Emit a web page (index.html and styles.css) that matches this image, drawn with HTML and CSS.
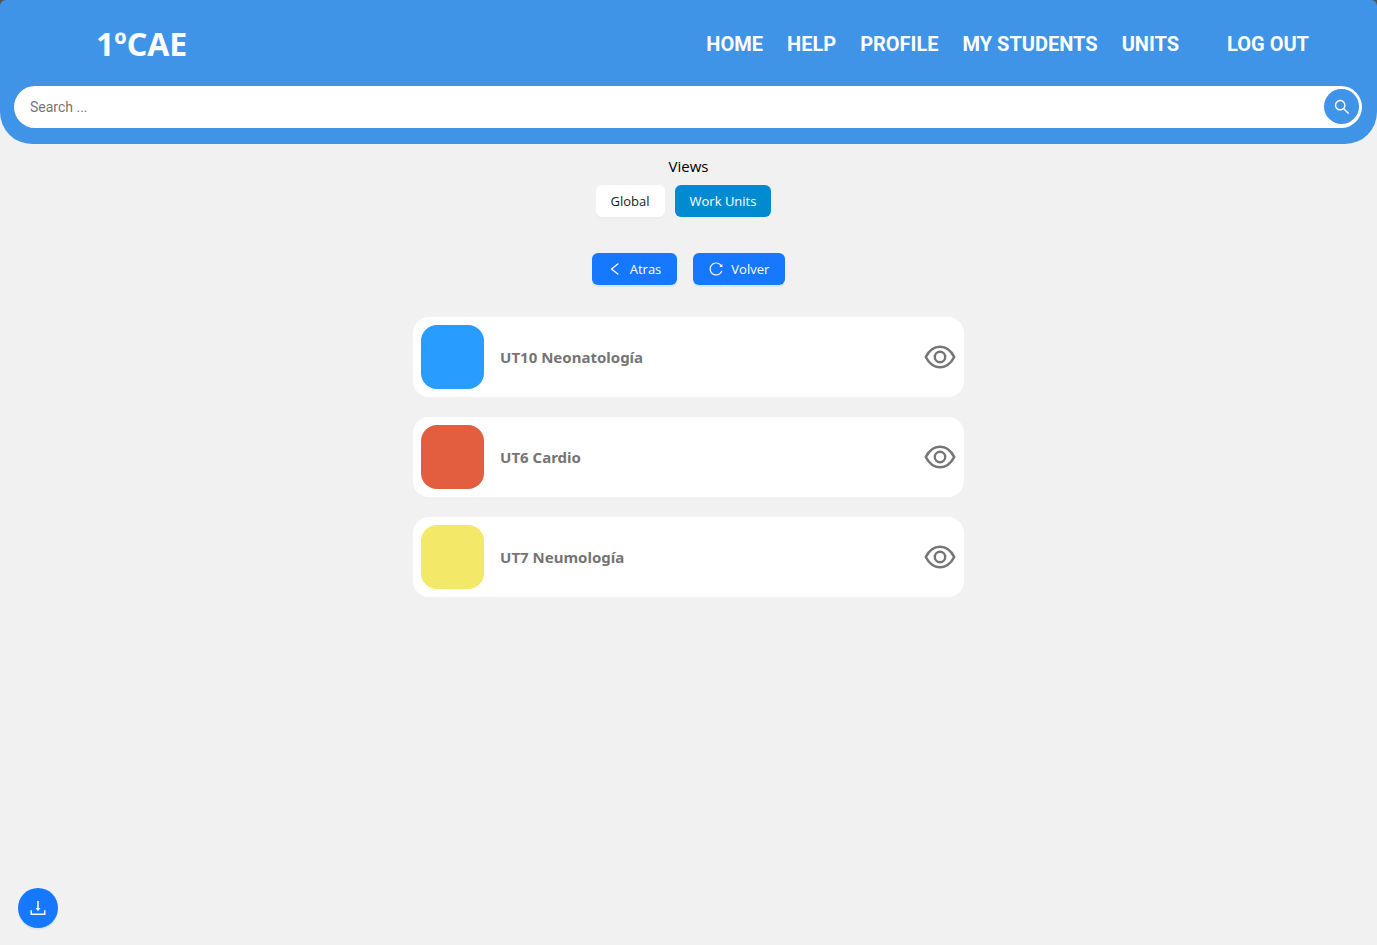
FILE: index.html
```html
<!DOCTYPE html>
<html lang="en">
<head>
<meta charset="utf-8">
<meta name="viewport" content="width=device-width, initial-scale=1">
<title>1ºCAE</title>
<link rel="stylesheet" href="styles.css">
</head>
<body>
<svg class="sprite" aria-hidden="true">
  <symbol id="eye" viewBox="0 0 32 24">
    <path d="M1.8 12C5.2 5.4 10 1.8 16 1.8S26.800 5.400 30.200 12C26.800 18.600 22 22.200 16 22.200S5.200 18.600 1.800 12Z" fill="none" stroke="currentColor" stroke-width="2.600" stroke-linejoin="round"/>
    <circle cx="16" cy="12" r="5.200" fill="none" stroke="currentColor" stroke-width="2.400"/>
  </symbol>
</svg>
<header class="header">
  <div class="topbar">
    <h1 class="brand">1ºCAE</h1>
    <nav class="nav">
      <a href="#">HOME</a>
      <a href="#">HELP</a>
      <a href="#">PROFILE</a>
      <a href="#">MY STUDENTS</a>
      <a href="#">UNITS</a>
      <a class="logout" href="#">LOG OUT</a>
    </nav>
  </div>
  <form class="search">
    <input class="search-input" type="text" placeholder="Search ..." aria-label="Search">
    <button class="search-button" type="button" aria-label="Search">
      <svg class="icon icon-large" viewBox="64 64 896 896"><path d="M909.6 854.5L649.9 594.8C690.2 542.7 712 479 712 412c0-80.2-31.3-155.4-87.9-212.1-56.6-56.7-132-87.9-212.1-87.9s-155.5 31.3-212.1 87.9C143.2 256.5 112 331.8 112 412c0 80.1 31.3 155.5 87.9 212.1C256.5 680.8 331.8 712 412 712c67 0 130.6-21.8 182.7-62l259.7 259.6a8.2 8.2 0 0011.6 0l43.6-43.5a8.2 8.2 0 000-11.6zM570.4 570.4C528 612.7 471.8 636 412 636s-116-23.3-158.4-65.6C211.3 528 188 471.8 188 412s23.300-116.100 65.600-158.400C296 211.300 352.200 188 412 188s116.100 23.200 158.400 65.600S636 352.200 636 412s-23.300 116.100-65.600 158.400z"/></svg>
    </button>
  </form>
</header>
<main class="main">
  <p class="views-label">Views</p>
  <div class="views">
    <button class="button button-light" type="button">Global</button>
    <button class="button button-active" type="button">Work Units</button>
  </div>
  <div class="actions">
    <button class="button button-primary" type="button">
      <svg class="icon" viewBox="64 64 896 896"><path d="M724 218.3V141c0-6.7-7.7-10.4-12.9-6.3L260.3 486.8a31.86 31.86 0 000 50.3l450.8 352.1c5.300 4.100 12.900.4 12.900-6.300v-77.300c0-4.900-2.300-9.600-6.100-12.600l-360-281 360-281.100c3.800-3 6.100-7.700 6.100-12.600z"/></svg>
      <span>Atras</span>
    </button>
    <button class="button button-primary" type="button">
      <svg class="icon" viewBox="64 64 896 896"><path d="M909.1 209.3l-56.4 44.1C775.8 155.1 656.2 92 521.9 92 290 92 102.3 279.5 102 511.5 101.7 743.7 289.8 932 521.9 932c181.3 0 335.8-115 394.6-276.1 1.5-4.2-.7-8.9-4.9-10.3l-56.7-19.5a8 8 0 00-10.1 4.8c-1.8 5-3.8 10-5.9 14.9-17.3 41-42.1 77.8-73.7 109.4A344.77 344.77 0 01655.9 829c-42.3 17.9-87.4 27-133.8 27-46.5 0-91.5-9.1-133.8-27A341.5 341.5 0 01279 755.2a342.16 342.16 0 01-73.7-109.4c-17.9-42.4-27-87.4-27-133.9s9.1-91.5 27-133.9c17.3-41 42.1-77.8 73.7-109.4 31.6-31.6 68.4-56.4 109.3-73.8 42.3-17.9 87.4-27 133.8-27 46.5 0 91.5 9.1 133.8 27a341.5 341.5 0 01109.3 73.8c9.9 9.9 19.2 20.4 27.8 31.4l-60.2 47a8 8 0 003 14.1l175.6 43c5 1.2 9.9-2.6 9.9-7.7l.8-180.9c-.1-6.600-7.800-10.300-13-6.200z"/></svg>
      <span>Volver</span>
    </button>
  </div>
  <ul class="units">
    <li class="unit">
      <span class="swatch swatch-blue"></span>
      <span class="unit-name">UT10 Neonatología</span>
      <button class="view-button" type="button" aria-label="View UT10 Neonatología"><svg class="eye"><use href="#eye"/></svg></button>
    </li>
    <li class="unit">
      <span class="swatch swatch-red"></span>
      <span class="unit-name">UT6 Cardio</span>
      <button class="view-button" type="button" aria-label="View UT6 Cardio"><svg class="eye"><use href="#eye"/></svg></button>
    </li>
    <li class="unit">
      <span class="swatch swatch-yellow"></span>
      <span class="unit-name">UT7 Neumología</span>
      <button class="view-button" type="button" aria-label="View UT7 Neumología"><svg class="eye"><use href="#eye"/></svg></button>
    </li>
  </ul>
</main>
<button class="download" type="button" aria-label="Download">
  <svg class="icon icon-download" viewBox="64 64 896 896"><path d="M505.700 661a8 8 0 0012.600 0l112-141.700c4.100-5.200.4-12.900-6.300-12.900h-74.100V168c0-4.400-3.600-8-8-8h-60c-4.400 0-8 3.600-8 8v338.300H400c-6.700 0-10.400 7.700-6.300 12.900l112 141.800zM878 626h-60c-4.400 0-8 3.600-8 8v154H214V634c0-4.400-3.600-8-8-8h-60c-4.400 0-8 3.600-8 8v198c0 17.700 14.300 32 32 32h684c17.700 0 32-14.300 32-32V634c0-4.400-3.600-8-8-8z"/></svg>
</button>
</body>
</html>
```

FILE: styles.css
```css
* {
  box-sizing: border-box;
}

body {
  margin: 0;
  min-height: 100vh;
  background: linear-gradient(#555 8px, #f1f1f1 8px);
  color: #000;
  font-family: "Open Sans", "Noto Sans", sans-serif;
  font-size: 15px;
}

button {
  margin: 0;
  border: 0;
  font-family: inherit;
  cursor: pointer;
}

.sprite {
  position: absolute;
  width: 0;
  height: 0;
}

.header {
  padding: 0 15px 16px 14px;
  border-radius: 6px 6px 32px 32px;
  background: #3f94e8;
}

.topbar {
  display: flex;
  align-items: center;
  justify-content: space-between;
  height: 86px;
  padding: 2px 53px 0 82px;
}

.brand {
  margin: 0;
  color: #fff;
  font-family: "Noto Sans", sans-serif;
  font-size: 32px;
  font-weight: 700;
  line-height: 44px;
}

.nav {
  display: flex;
  gap: 24px;
}

.nav a {
  color: #fff;
  font-family: Roboto, sans-serif;
  font-size: 20px;
  font-weight: 700;
  line-height: 24px;
  text-decoration: none;
}

.nav .logout {
  margin-left: 24px;
}

.search {
  display: flex;
  align-items: center;
  height: 42px;
  padding: 0 3px 1px 16px;
  border-radius: 21px;
  background: #fff;
}

.search-input {
  flex: 1;
  min-width: 0;
  padding: 0;
  border: 0;
  outline: 0;
  background: transparent;
  font-family: Roboto, sans-serif;
  font-size: 14px;
}

.search-input::placeholder {
  color: #757575;
}

.search-button {
  display: grid;
  place-items: center;
  width: 35px;
  height: 35px;
  padding: 0;
  border-radius: 50%;
  background: #3f94e8;
  color: #fff;
}

.icon {
  width: 14px;
  height: 14px;
  fill: currentColor;
}

.icon-large {
  width: 16px;
  height: 16px;
}

.icon-download {
  width: 18px;
  height: 18px;
}

.main {
  display: flex;
  flex-direction: column;
  align-items: center;
  padding: 10px 0 40px;
}

.views-label {
  margin: 0 0 7px;
  line-height: 24px;
}

.views {
  display: flex;
  gap: 10px;
  margin: 0 10px 36px 0;
}

.actions {
  display: flex;
  gap: 16px;
  margin-bottom: 32px;
}

.button {
  display: flex;
  align-items: center;
  gap: 8px;
  height: 32px;
  padding: 0 15px;
  border-radius: 6px;
  font-size: 13px;
  line-height: 22px;
}

.button-light {
  background: #fff;
  color: #1a1a1a;
  box-shadow: 0 2px 0 rgba(0, 0, 0, 0.02);
}

.button-active {
  background: #008bd0;
  color: #fff;
}

.button-primary {
  padding: 0 16px;
  background: #1677ff;
  color: #fff;
  box-shadow: 0 2px 0 rgba(5, 145, 255, 0.1);
}

.units {
  display: grid;
  gap: 20px;
  width: 40%;
  margin: 0;
  padding: 0;
  list-style: none;
}

.unit {
  display: flex;
  align-items: center;
  padding: 8px;
  border-radius: 16px;
  background: #fff;
}

.swatch {
  flex: none;
  width: 63px;
  height: 64px;
  margin-right: 16px;
  border-radius: 16px;
}

.swatch-blue {
  background: #289cff;
}

.swatch-red {
  background: #e25e3e;
}

.swatch-yellow {
  background: #f3e868;
}

.unit-name {
  flex: 1;
  color: #757575;
  font-family: "Noto Sans", sans-serif;
  font-weight: 700;
  line-height: 24px;
}

.view-button {
  padding: 0;
  background: none;
  color: #757575;
}

.eye {
  display: block;
  width: 32px;
  height: 24px;
}

.download {
  position: fixed;
  bottom: 17px;
  left: 18px;
  display: grid;
  place-items: center;
  width: 40px;
  height: 40px;
  padding: 0;
  border-radius: 50%;
  background: #1677ff;
  color: #fff;
  box-shadow: 0 2px 0 rgba(5, 145, 255, 0.1);
}
```
